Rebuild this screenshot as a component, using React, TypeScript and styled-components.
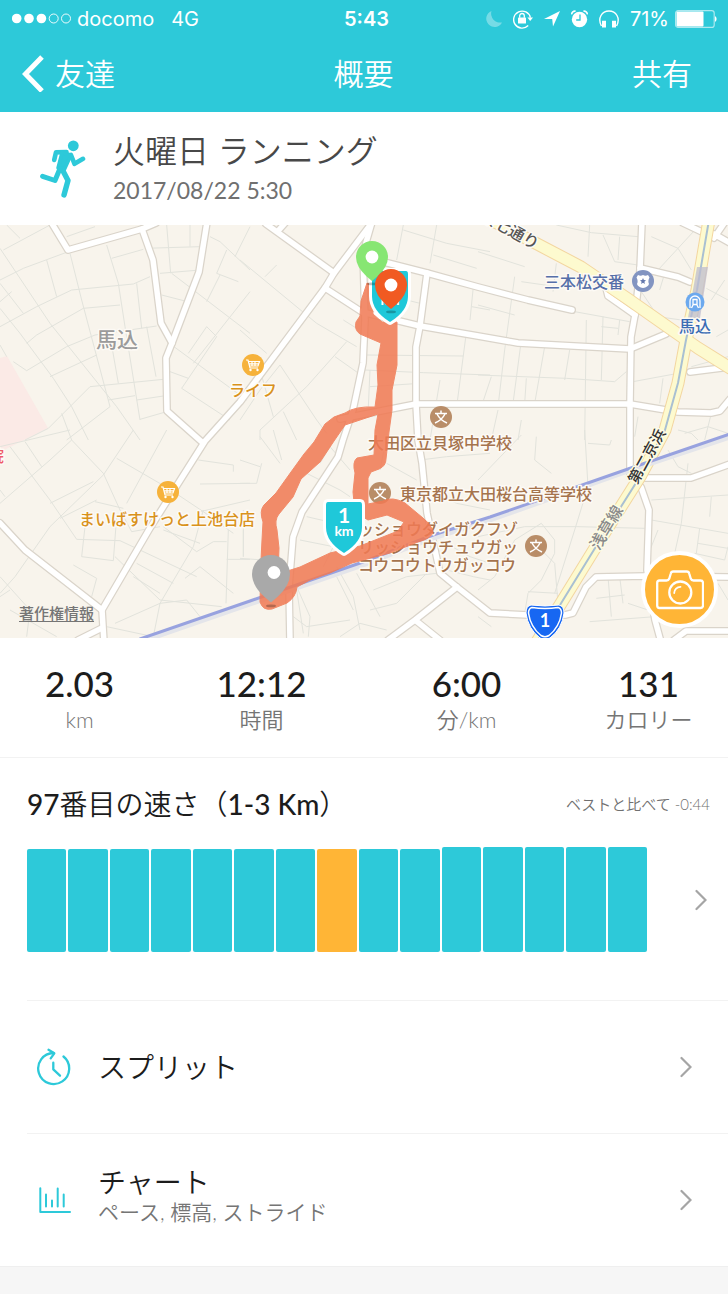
import React from "react";
import styled, { createGlobalStyle } from "styled-components";

const teal = "#2dc9d9";
const amber = "#ffb536";
const textFont = `Lato, "Noto Sans CJK JP", sans-serif`;
const statusFont = `Inter, "Noto Sans CJK JP", sans-serif`;

const GlobalStyle = createGlobalStyle`
  *, *::before, *::after { box-sizing: border-box; }
  body {
    margin: 0;
    background: #f6f6f6;
    color: #1c1c1c;
    font-family: ${textFont};
  }
  button { font: inherit; color: inherit; background: none; border: 0; padding: 0; cursor: pointer; }
  h1, h2, h3, p, dl, dd, dt { margin: 0; font-weight: inherit; }
  svg { display: block; flex: none; }
`;

const Page = styled.div`
  display: flex;
  flex-direction: column;
`;

/* Header */

const Header = styled.header`
  background: ${teal};
  color: #fff;
`;

const StatusBar = styled.div`
  display: grid;
  grid-template-columns: 1fr auto 1fr;
  align-items: center;
  height: 37px;
  padding: 0 11px 0 12px;
  font-family: ${statusFont};
  font-size: 20px;
  line-height: 24px;
`;

const StatusGroup = styled.div<{ $end?: boolean; $gap: number }>`
  display: flex;
  align-items: center;
  justify-content: ${(p) => (p.$end ? "flex-end" : "flex-start")};
  gap: ${(p) => p.$gap}px;
`;

const Clock = styled.span`
  padding-left: 4px;
  font-weight: 600;
`;

const NavBar = styled.nav`
  display: grid;
  grid-template-columns: 1fr auto 1fr;
  align-items: center;
  height: 75px;
  padding: 0 36px 4px 22px;
  font-size: 30px;
  line-height: 40px;
  font-weight: 350;
`;

const BackButton = styled.button`
  display: flex;
  align-items: center;
  gap: 11px;
  justify-self: start;
`;

const ShareButton = styled.button`
  justify-self: end;
`;

const NavTitle = styled.h1`
  font-size: 30px;
  padding-left: 13px;
`;

/* Activity heading */

const Activity = styled.section`
  display: flex;
  align-items: center;
  gap: 27px;
  padding: 17px 40px 18px;
  background: #fff;
`;

const ActivityTitle = styled.h2`
  font-size: 32px;
  line-height: 44px;
  font-weight: 350;
  color: #484848;
`;

const ActivityDate = styled.p`
  font-size: 23px;
  line-height: 34px;
  color: #707070;
`;

/* Map */

const MapFrame = styled.section`
  position: relative;
  overflow: hidden;
`;

const MapDrawing = styled.svg`
  width: 100%;
  height: auto;
  font-family: "Noto Sans CJK JP", sans-serif;
`;

const MapLabel = styled.text<{ $size?: number; $halo?: string }>`
  font-size: ${(p) => p.$size ?? 16}px;
  font-weight: 500;
  stroke: ${(p) => p.$halo ?? "#fdfaf5"};
  stroke-width: 3px;
  stroke-linejoin: round;
  paint-order: stroke;
`;

const SignText = styled.text<{ $size: number }>`
  font-family: ${textFont};
  font-size: ${(p) => p.$size}px;
  font-weight: 700;
  fill: #fff;
  text-anchor: middle;
`;

const LegalLink = styled.a`
  position: absolute;
  left: 19px;
  bottom: 14px;
  font-size: 15px;
  line-height: 22px;
  font-weight: 500;
  color: #757575;
  text-decoration: underline;
  text-underline-offset: 2px;
`;

const CameraButton = styled.button`
  position: absolute;
  right: 10px;
  bottom: 10px;
  display: grid;
  place-items: center;
  width: 77px;
  height: 77px;
  border: 4px solid #fff;
  border-radius: 50%;
  background: ${amber};
`;

/* Figures */

const Figures = styled.dl`
  display: grid;
  grid-template-columns: 159fr 205fr 205fr 159fr;
  padding: 23px 0 22px;
  background: #fff;
  border-bottom: 1px solid #f2f2f2;
`;

const Figure = styled.div`
  display: flex;
  flex-direction: column-reverse;
  align-items: center;
`;

const FigureValue = styled.dd`
  font-size: 35px;
  line-height: 44px;
  font-weight: 500;
`;

const FigureLabel = styled.dt`
  font-size: 22px;
  line-height: 30px;
  font-weight: 350;
  color: #757575;
`;

/* Speed ranking */

const Ranking = styled.section`
  padding: 28px 0 48px 27px;
  background: #fff;
`;

const RankingHead = styled.div`
  display: flex;
  align-items: center;
  justify-content: space-between;
  padding-right: 18px;
`;

const RankingTitle = styled.h2`
  font-size: 28px;
  line-height: 36px;
  font-weight: 350;
`;

const Latin = styled.span`
  font-weight: 500;
`;

const RankingNote = styled.p`
  font-size: 15px;
  line-height: 20px;
  font-weight: 350;
  color: #707070;
`;

const RankingChart = styled.button`
  display: flex;
  align-items: center;
  gap: 48px;
  width: 100%;
  margin-top: 25px;
  padding-right: 21px;
`;

const Bars = styled.span`
  display: flex;
  flex: 1;
  align-items: flex-end;
  gap: 2px;
  height: 105px;
`;

const Bar = styled.span<{ $tall: boolean; $current: boolean }>`
  flex: 1;
  height: ${(p) => (p.$tall ? 105 : 103)}px;
  border-radius: 2px;
  background: ${(p) => (p.$current ? amber : teal)};
`;

/* Detail rows */

const RowList = styled.section`
  padding-left: 27px;
  background: #fff;
  border-bottom: 1px solid #efefef;
`;

const Row = styled.button`
  display: flex;
  align-items: center;
  gap: 26px;
  width: 100%;
  height: 133px;
  padding: 0 36px 0 9px;
  border-top: 1px solid #f2f2f2;
  text-align: left;
`;

const RowText = styled.span`
  display: flex;
  flex: 1;
  flex-direction: column;
`;

const RowTitle = styled.span`
  font-size: 28px;
  line-height: 36px;
  font-weight: 350;
`;

const RowNote = styled.span`
  padding-bottom: 12px;
  font-size: 21px;
  line-height: 24px;
  font-weight: 350;
  color: #757575;
`;

/* Icons */

const Chevron = () => (
  <svg width="12" height="22" viewBox="0 0 12 22" fill="none" stroke="#a5a5a5" strokeWidth="2.2" strokeLinecap="round" aria-hidden>
    <path d="M1.5 2L10.500 11L1.500 20" />
  </svg>
);

const SignalDots = () => (
  <svg width="60" height="12" viewBox="0 0 60 12" aria-hidden>
    <g fill="#fff">
      <circle cx="4.7" cy="5.5" r="4.8" />
      <circle cx="17" cy="5.5" r="4.8" />
      <circle cx="29.4" cy="5.5" r="4.8" />
    </g>
    <g fill="none" stroke="#fff" strokeWidth="0.9">
      <circle cx="41.7" cy="5.5" r="4.5" />
      <circle cx="54" cy="5.5" r="4.5" />
    </g>
  </svg>
);

const Moon = () => (
  <svg width="16" height="18" viewBox="0 0 16 18" fill="#fff" opacity="0.35" aria-hidden>
    <path d="M5.500 1A8.300 8.300 0 1 0 16 12.400A9 9 0 0 1 5.500 1Z" />
  </svg>
);

const RotationLock = () => (
  <svg width="20" height="20" viewBox="0 0 20 20" fill="none" stroke="#fff" aria-hidden>
    <path d="M15.200 16.600A8.500 8.500 0 1 1 17.400 8.600" strokeWidth="1.400" />
    <path d="M14.400 8.600H20L17.200 12Z" fill="#fff" stroke="none" />
    <rect x="5" y="8.600" width="8" height="6" rx="0.600" fill="#fff" stroke="none" />
    <path d="M6.700 8.800V6.800A2.300 2.300 0 0 1 11.300 6.800V8.800" strokeWidth="1.300" />
  </svg>
);

const LocationArrow = () => (
  <svg width="16" height="16" viewBox="0 0 16 16" fill="#fff" aria-hidden>
    <path d="M16 0L9 15.500L8.200 8H0Z" />
  </svg>
);

const Alarm = () => (
  <svg width="17" height="18" viewBox="0 0 17 18" aria-hidden>
    <circle cx="8.500" cy="9.500" r="7.700" fill="#fff" />
    <path d="M0.800 4.400A3 3 0 0 1 4.600 1.200M16.200 4.400A3 3 0 0 0 12.400 1.200" stroke="#fff" strokeWidth="1.600" fill="none" />
    <path d="M9 4.600V10H5.200" stroke={teal} strokeWidth="1.300" fill="none" />
  </svg>
);

const Headphones = () => (
  <svg width="20" height="18" viewBox="0 0 20 18" fill="none" stroke="#fff" aria-hidden>
    <path d="M2.400 16C-1.800 8 3 1 10 1S21.800 8 17.600 16" strokeWidth="1.400" />
    <path d="M5 10.800V17.500M15 10.800V17.500" strokeWidth="4" />
  </svg>
);

const Battery = () => (
  <svg width="42" height="18" viewBox="0 0 42 18" aria-hidden>
    <rect x="0.600" y="0.600" width="38.600" height="16.800" rx="2.500" fill="none" stroke="#fff" strokeWidth="1.200" opacity="0.6" />
    <rect x="1.500" y="1.500" width="27" height="15" rx="1" fill="#fff" />
    <path d="M40 6A3.600 3.600 0 0 1 40 12Z" fill="#fff" />
  </svg>
);

const Runner = () => (
  <svg width="46" height="60" viewBox="0 -2 46 60" fill="none" stroke={teal} strokeLinecap="round" strokeLinejoin="round" aria-hidden>
    <circle cx="33.300" cy="5.800" r="5.400" fill={teal} stroke="none" />
    <path d="M26.500 12L16 12.400L14.200 20" strokeWidth="4.600" />
    <path d="M22 12.500L31 15L23.500 31.500L18 28Z" fill={teal} strokeWidth="3.500" />
    <path d="M31 15L34.500 23.800L43 18.800" strokeWidth="4.600" />
    <path d="M22 29L28 40.500L24 55" strokeWidth="5.400" />
    <path d="M20 28.500L15 40.500L2.600 36.300" strokeWidth="5" />
  </svg>
);

const SplitIcon = () => (
  <svg width="36" height="38" viewBox="0 0 36 38" fill="none" stroke={teal} strokeWidth="2.300" strokeLinecap="round" strokeLinejoin="round" aria-hidden>
    <path d="M27.500 8.500A15.500 15.500 0 1 1 17.500 5" />
    <path d="M12.500 1.800L18.300 5.300L14.700 10.300" />
    <path d="M17.300 14.700V21.300L24 27.700" />
  </svg>
);

const ChartIcon = () => (
  <svg width="36" height="32" viewBox="0 0 36 32" fill="none" stroke={teal} strokeWidth="2" strokeLinecap="round" strokeLinejoin="round" aria-hidden>
    <path d="M4.300 4.300V28H34" />
    <path d="M10 10.500V22.500M16 16.500V22.500M21.700 4.500V22.500M27.700 10.500V22.500" />
  </svg>
);

const CameraIcon = () => (
  <svg width="48" height="40" viewBox="0 0 48 40" fill="none" stroke="#fff" strokeWidth="2.300" strokeLinejoin="round" aria-hidden>
    <path d="M3.500 10.500H10.500Q12.500 10.500 13.300 8.500L14.800 3.500Q15.300 1.500 17.300 1.500H30.700Q32.700 1.500 33.200 3.500L34.700 8.500Q35.500 10.500 37.500 10.500H44.500Q47 10.500 47 13V35.500Q47 38 44.500 38H3.500Q1.200 38 1.200 35.500V13Q1.200 10.500 3.500 10.500Z" />
    <circle cx="24.300" cy="22.500" r="11" />
    <path d="M18.200 23A6.200 6.200 0 0 1 24.500 16.800" strokeWidth="1.800" strokeLinecap="round" />
  </svg>
);

/* Map drawing */

const minorStreets: { x: number; y: number; d: string }[] = [
  {
    x: 0,
    y: 220,
    d: "M0 85L150 310L210 385L350 560L420 660M0 265L60 340L160 475L215 560L265 660M40 425L80 452L200 380L285 345L470 318M0 180L70 145L205 95M0 320L110 260L215 210L400 192L450 170M210 100L245 240L330 560M320 75L355 190L375 320L420 600M410 190L425 325M440 320L468 470M335 375L355 490M270 500L490 478M150 470L290 405M80 370L110 345L250 265L360 255M75 660L145 625L270 500M325 540L405 527M410 540L490 528M420 598L500 575M335 115L430 88M500 15L512 160M435 85L600 80M480 160L600 150M485 225L555 243M515 160L750 340M515 375L740 540M510 455L565 475M565 400L620 320L650 350L545 505L690 600M630 50L660 65L750 150M680 90L650 160L715 185M660 165L620 245M750 20L705 110M750 215L580 430M0 375L20 410M0 190L70 280M10 90L150 15M140 120L170 230M200 50L285 20M185 580L215 660M20 15L60 55M570 15L570 80M330 560L200 660M0 245L35 215",
  },
  {
    x: 240,
    y: 220,
    d: "M0 120L230 310L350 380M75 170L110 135M310 300L350 325M490 15L470 120M590 15L570 130M580 105L710 145M490 30L620 70L750 95M700 200L690 300M695 260L750 270M680 330L650 560M380 405L670 408M375 450L550 458L750 465M390 450L385 560M120 435L60 510L0 600M120 435L230 600L260 640M285 410L370 470M320 365L200 500L60 630L60 660M130 575L170 660M60 450L100 590M500 240L540 250M390 500L540 490M0 330L80 400M600 480L570 660",
  },
  {
    x: 478,
    y: 220,
    d: "M0 95L140 140M235 130L225 215M130 185L235 200M335 15L330 110M235 15L340 38L480 50M375 45L410 125L480 135M425 50L420 120M0 255L110 285M110 170L80 390L60 560M290 275L455 305M375 290L370 480M425 300L420 345M370 320L420 325M0 465L265 475L410 485L445 455M130 360L105 550M200 380L170 550M275 390L260 480M325 300L320 660M40 470L15 545M145 475L140 550M465 485L600 460M555 475L545 550M520 50L600 85L640 150M660 20L600 85L540 150M560 160L545 210M685 205L750 240M700 240L740 180M480 200L540 290L610 300M715 350L750 330M640 440L750 410M700 580L680 660M620 640L690 620L750 640M480 590L470 650M60 570L40 660M130 600L120 660",
  },
  {
    x: 0,
    y: 430,
    d: "M30 50L150 210L230 328M75 35L125 110M0 220L150 90L215 30M0 50L210 0M215 30L310 130L360 240L395 305L480 290M400 0L310 135L150 290L45 440L0 490M150 220L280 155M180 265L290 210M255 290L245 380L340 392L350 260M230 328L360 332L590 440M345 380L480 510L665 530M285 215L370 235M350 85L505 175L610 245L700 310M500 0L440 110L380 220M595 90L700 105L700 125M600 162L750 160M600 245L750 210M610 240L580 350L480 520L460 620M490 290L590 365L640 335H680M685 300L678 520M730 300V380M680 388H750M555 445L600 410L700 490M410 400L520 460M400 440L480 490M220 405L290 445L275 500M345 580L480 520L560 510L600 560M0 440L90 540L80 620M0 500L30 480M0 180L15 200M30 540L170 620M320 590L460 620M490 300L600 340",
  },
  {
    x: 240,
    y: 430,
    d: "M0 160H50L65 100M0 90L60 110M10 240V380M0 385L70 390M125 90L100 0M200 130L300 180L330 200M200 260L330 290M180 330L280 350L250 410M60 20L120 100M160 560L200 590L330 570M170 470L210 560L205 620M290 440L340 540M360 600L340 500L290 410M400 480L500 440L590 430M420 560L350 430M390 540L470 520L560 430M330 120L270 50L240 100M440 100L530 150M440 20L420 120M540 90L620 80L750 70M560 180L650 220L750 240M600 330L690 380L750 400M620 420L700 440L750 450M300 620L360 580L440 600M170 480L190 610",
  },
  {
    x: 478,
    y: 430,
    d: "M0 150L130 15M175 20L170 90L220 130M320 0L330 170L290 300L230 490M330 40L395 45L400 30M0 320L140 290L300 290L500 295M50 440L110 330L190 280L230 330V370L190 450L150 490L140 550M150 485L240 490M180 350L230 400L240 520M390 440L400 560M425 440L435 520M355 505L440 495M335 575L530 560M520 210L750 195M520 270L750 310M630 100L610 280L590 370M700 200L695 260M665 295L655 370M660 340L750 355M650 370L740 390L750 350M720 460L750 510M570 60L600 110L640 130M600 0L640 10L660 30M0 560L40 590M0 480L50 440M540 300L500 400M450 520L510 540",
  },
];

const roads = [
  "M51 222L68 250L142 229L156 223",
  "M142 229L153 260L161 323L172 343",
  "M207 222L199 272L172 343L166 358L167 411L203 443",
  "M374 220L334 273L325 288L240 402L205 441L150 528L102 610L104 642",
  "M0 523L25 550L102 610",
  "M102 628L78 640",
  "M266 224L334 273",
  "M278 231L286 222",
  "M325 288L362 312L420 326L478 336L518 343L630 349L666 334",
  "M372 222L363 253L365 320L363 363L353 410L343 440L338 457L302 512L293 537L289 587L290 642",
  "M376 260L427 273L478 287L528 300L572 310",
  "M427 273L420 326L416 347L416 404L418 440L422 463L427 513L440 573L457 587L490 613L528 615H565L573 613L586 587L596 577L645 576L730 577",
  "M457 587L415 620L388 640M415 620L440 640",
  "M340 419L416 404H630L678 412L711 413L720 411L730 399",
  "M642 222L640 270L635 315L631 337L630 404V475",
  "M640 268L678 277L690 282",
  "M635 315L608 296L606 288",
  "M690 372L730 367",
  "M645 478L691 478L708 472L730 464",
  "M641 487L649 510L647 570L655 620L661 642",
  "M674 640L686 631H730",
  "M683 223L702 232M714 234L730 243M714 238L725 222",
];

const mainRoads = ["M474 211L541 246L581 267L628 299L675 332L698 348L730 368", "M709 220L697 290L686 340L678 383L665 430L641 475L600 540L560 605L535 645"];

const Cart = ({ x, y }: { x: number; y: number }) => (
  <g transform={`translate(${x} ${y})`}>
    <circle r="11" fill="#f6b23b" />
    <path d="M-7 -5H-5L-3 3H5M-4.500 -3.500H6.500L5 1H-3.500M-1 -3.500V1M2 -3.500V1M-4 -1.200H6" fill="none" stroke="#fff" strokeWidth="1.200" />
    <circle cx="-2.500" cy="5" r="1.200" fill="#fff" />
    <circle cx="4.500" cy="5" r="1.200" fill="#fff" />
  </g>
);

const School = ({ x, y }: { x: number; y: number }) => (
  <g transform={`translate(${x} ${y})`}>
    <circle r="11" fill="#b98d68" />
    <path d="M0 -6.500V-4M-6 -3.500H6M-4 -3Q-1 3 6 6M4 -3Q1 3 -6 6" fill="none" stroke="#fff" strokeWidth="1.500" />
  </g>
);

const KmSign = ({ x, y }: { x: number; y: number }) => (
  <g transform={`translate(${x} ${y})`}>
    <path d="M-16 0H16Q18 0 18 3V25Q18 40 0 51Q-18 40 -18 25V3Q-18 0 -16 0Z" fill="#1fc8d9" stroke="#fff" strokeWidth="6" strokeLinejoin="round" paintOrder="stroke" />
    <SignText $size={21} y="21">1</SignText>
    <SignText $size={14} y="34">km</SignText>
  </g>
);

const Pin = ({ x, y, r, color, hole = 0 }: { x: number; y: number; r: number; color: string; hole?: number }) => (
  <g transform={`translate(${x} ${y})`}>
    <ellipse cx="0" cy={r * 1.680} rx="5" ry="1.300" fill="#000" opacity="0.25" />
    <path
      d={`M${-r} 0A${r} ${r} 0 0 1 ${r} 0Q${r} ${r * 0.6} ${r * 0.35} ${r * 1.200}L0 ${r * 1.500}L${-r * 0.35} ${r * 1.200}Q${-r} ${r * 0.6} ${-r} 0Z`}
      fill={color}
    />
    <circle cx={hole} cy={-hole / 2} r="6.400" fill="#fff" />
  </g>
);

const RouteMap = () => (
  <MapDrawing viewBox="0 225 728 413" role="img" aria-label="ランニングコースの地図">
    <rect y="225" width="728" height="413" fill="#f8f4ec" />
    <path d="M0 358L7 356L48 428L0 452Z" fill="#fbeae6" />
    <g fill="none" stroke="#e2e3dc" strokeWidth="3">
      {minorStreets.map((tile, i) => (
        <path key={i} transform={`translate(${tile.x} ${tile.y}) scale(${1 / 3})`} d={tile.d} />
      ))}
    </g>
    <g fill="none" strokeLinejoin="round" strokeLinecap="round">
      {roads.map((d) => <path key={d} d={d} stroke="#dad4ca" strokeWidth="8" />)}
      {roads.map((d) => <path key={d} d={d} stroke="#fff" strokeWidth="5.500" />)}
      {mainRoads.map((d) => <path key={d} d={d} stroke="#f3d6a0" strokeWidth="13" />)}
      {mainRoads.map((d) => <path key={d} d={d} stroke="#fdfacf" strokeWidth="11" />)}
      <path d={mainRoads[1]} stroke="#a9c0d2" strokeWidth="2" />
      <path d="M140 642L250 604L363 565L433 538L490 520L628 471L730 437" stroke="#e4e5ea" strokeWidth="5" />
      <path d="M140 639L250 601L363 562L433 535L490 517L628 469L730 434" stroke="#98a2df" strokeWidth="3" />
    </g>
    <path d="M697 267H708L700 318H688Z" fill="#bdbccf" opacity="0.75" />

    <g fill="#a5734d">
      <MapLabel x="368" y="449">大田区立貝塚中学校</MapLabel>
      <MapLabel x="400" y="500">東京都立大田桜台高等学校</MapLabel>
      <MapLabel x="358" y="535">ッショウダイガクフゾ</MapLabel>
      <MapLabel x="358" y="553">リッショウチュウガッ</MapLabel>
      <MapLabel x="358" y="571">コウコウトウガッコウ</MapLabel>
    </g>
    <g fill="#d9921c">
      <MapLabel x="229" y="396">ライフ</MapLabel>
      <MapLabel x="79" y="525">まいばすけっと上池台店</MapLabel>
    </g>
    <MapLabel x="544" y="288" fill="#566fa9">三本松交番</MapLabel>
    <MapLabel x="679" y="332" fill="#3b6cb4">馬込</MapLabel>
    <MapLabel $size={21} x="96" y="347" fill="#9b9b9b">馬込</MapLabel>
    <MapLabel x="-12" y="462" fill="#ee5a68">院</MapLabel>
    <MapLabel transform="translate(479 219) rotate(29)" fill="#555">環七通り</MapLabel>
    <MapLabel $size={15} $halo="#fdfbe6" transform="translate(637 485) rotate(-61)" fill="#333">第二京浜</MapLabel>
    <MapLabel $halo="#fdfbe6" transform="translate(599 551) rotate(-59)" fill="#8b8b8b">浅草線</MapLabel>

    <Cart x={253} y={365} />
    <Cart x={168} y={492} />
    <School x={441} y={417} />
    <School x={380} y={493} />
    <School x={536} y={546} />
    <g transform="translate(643 281)">
      <circle r="11" fill="#8294c1" />
      <path d="M-5 -6Q-2.500 -4.500 0 -6Q2.500 -4.500 5 -6L6.500 -3.500Q4.500 0 6 3Q5 6 0 7Q-5 6 -6 3Q-4.500 0 -6.500 -3.500Z" fill="#fff" />
      <path d="M0 -3L0.900 -0.900L3 -0.700L1.400 0.700L1.900 2.900L0 1.700L-1.900 2.900L-1.400 0.700L-3 -0.700L-0.900 -0.900Z" fill="#6478ad" />
    </g>
    <g transform="translate(695 302)">
      <circle r="9.500" fill="#6ca9ee" />
      <path d="M-5 6V-1A5 5 0 0 1 5 -1V6" fill="none" stroke="#fff" strokeWidth="1.300" />
      <path d="M-2 -2.500H2V2.500H-2ZM-2 3L-3.500 6M2 3L3.500 6" fill="none" stroke="#fff" strokeWidth="1.300" />
    </g>

    <g fill="#f17a54" stroke="#f17a54" strokeLinejoin="round" opacity="0.86">
      <path d="M367 283L361 301L360 316L356 322Q354 330 360 334L381 343L377 365L378 385L375 407Q355 406 345 413L334 417L325 424L314 442L304 454L291 472L276 493L264 505Q259 511 263 522L262 540L261 560L260 602Q263 611 272 609L287 603Q296 597 297 587L310 580L330 573L352 563L390 553L418 542Q433 538 433 531Q431 524 423 518L405 503Q392 496 383 501L368 504L368 478L371 472L379 469Q386 466 386 459L389 432L392 410L392 390L397 365L397 322L382 322L373 314L372 285Z M378 414L375 430L374 455L357 458Q352 462 355 473L353 492L355 512L368 520L387 515L404 522L398 531L360 546L330 553L300 567L278 574L279 548L277 530Q274 520 279 514L293 497L301 479L320 462L334 441L345 425L360 420Z" fillRule="evenodd" strokeWidth="1" />
    </g>

    <KmSign x={344} y={502} />
    <KmSign x={390} y={271} />
    <Pin x={372} y={257} r={16} color="#87e673" />
    <Pin x={391} y={285} r={16} color="#f15a22" />
    <Pin x={271} y={574} r={19} color="#a9a9a9" hole={3} />

    <g transform="translate(545 605)">
      <path d="M-14 0Q0 2 14 0Q19 1 19 8Q17 24 5 33Q0 36 -5 33Q-17 24 -19 8Q-19 1 -14 0Z" fill="#1767f2" stroke="#fff" strokeWidth="1" />
      <path d="M-13 2.500Q0 4.500 13 2.500Q16.500 3.500 16.500 8Q14.500 22 4 30.500Q0 33 -4 30.500Q-14.500 22 -16.500 8Q-16.500 3.500 -13 2.500Z" fill="none" stroke="#fff" strokeWidth="1.500" />
      <SignText $size={18} y="22">1</SignText>
    </g>
  </MapDrawing>
);

const figures = [
  { value: "2.03", label: "km" },
  { value: "12:12", label: "時間" },
  { value: "6:00", label: "分/km" },
  { value: "131", label: "カロリー" },
];

const bars = Array.from({ length: 15 }, (_, i) => ({ tall: i >= 10, current: i === 7 }));

export default function App() {
  return (
    <Page>
      <GlobalStyle />
      <Header>
        <StatusBar>
          <StatusGroup $gap={5}>
            <SignalDots />
            <StatusGroup $gap={17}>
              <span>docomo</span>
              <span>4G</span>
            </StatusGroup>
          </StatusGroup>
          <Clock>5:43</Clock>
          <StatusGroup $end $gap={6}>
            <StatusGroup $gap={11}>
              <Moon />
              <RotationLock />
              <LocationArrow />
              <Alarm />
              <Headphones />
              <span>71%</span>
            </StatusGroup>
            <Battery />
          </StatusGroup>
        </StatusBar>
        <NavBar>
          <BackButton type="button">
            <svg width="22" height="38" viewBox="0 0 22 38" fill="none" stroke="#fff" strokeWidth="5" aria-hidden>
              <path d="M20 3L3.500 20L20 37" />
            </svg>
            友達
          </BackButton>
          <NavTitle>概要</NavTitle>
          <ShareButton type="button">共有</ShareButton>
        </NavBar>
      </Header>

      <Activity>
        <Runner />
        <div>
          <ActivityTitle>火曜日 ランニング</ActivityTitle>
          <ActivityDate>2017/08/22 5:30</ActivityDate>
        </div>
      </Activity>

      <MapFrame>
        <RouteMap />
        <LegalLink href="#legal">著作権情報</LegalLink>
        <CameraButton type="button" aria-label="写真を追加">
          <CameraIcon />
        </CameraButton>
      </MapFrame>

      <Figures>
        {figures.map((f) => (
          <Figure key={f.label}>
            <FigureLabel>{f.label}</FigureLabel>
            <FigureValue>{f.value}</FigureValue>
          </Figure>
        ))}
      </Figures>

      <Ranking>
        <RankingHead>
          <RankingTitle>
            <Latin>97</Latin>番目の速さ（<Latin>1-3 Km</Latin>）
          </RankingTitle>
          <RankingNote>ベストと比べて -0:44</RankingNote>
        </RankingHead>
        <RankingChart type="button" aria-label="速さの履歴">
          <Bars>
            {bars.map((b, i) => (
              <Bar key={i} $tall={b.tall} $current={b.current} />
            ))}
          </Bars>
          <Chevron />
        </RankingChart>
      </Ranking>

      <RowList>
        <Row type="button">
          <SplitIcon />
          <RowText>
            <RowTitle>スプリット</RowTitle>
          </RowText>
          <Chevron />
        </Row>
        <Row type="button">
          <ChartIcon />
          <RowText>
            <RowTitle>チャート</RowTitle>
            <RowNote>ペース, 標高, ストライド</RowNote>
          </RowText>
          <Chevron />
        </Row>
      </RowList>
    </Page>
  );
}
